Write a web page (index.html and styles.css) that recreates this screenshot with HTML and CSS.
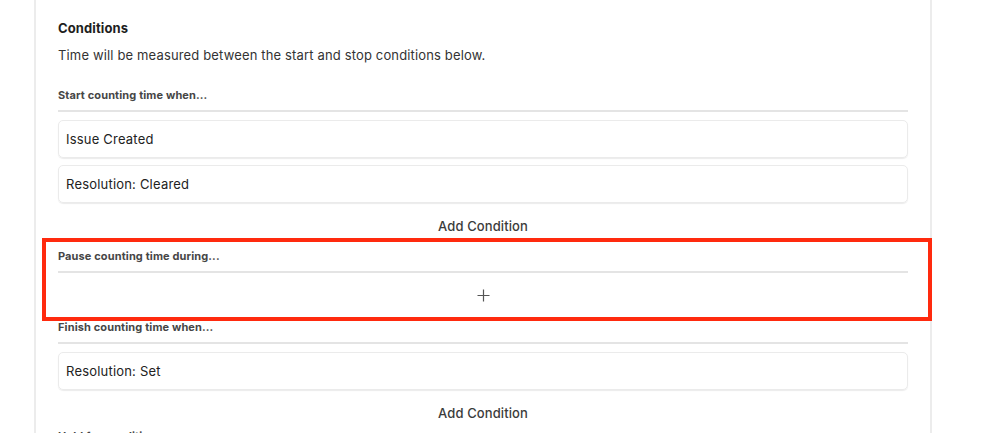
FILE: index.html
```html
<!DOCTYPE html>
<html lang="en">
<head>
<meta charset="utf-8">
<title>Conditions</title>
<link rel="stylesheet" href="styles.css">
</head>
<body>
<div class="page">
  <div class="panel">
    <h3 class="title">Conditions</h3>
    <p class="desc">Time will be measured between the start and stop conditions below.</p>

    <section class="group">
      <div class="label">Start counting time when...</div>
      <div class="list">
        <div class="card">Issue Created</div>
        <div class="card">Resolution: Cleared</div>
      </div>
      <div class="add">Add Condition</div>
    </section>

    <section class="group">
      <div class="label">Pause counting time during...</div>
      <div class="plus-row">
        <svg class="plus" width="13" height="13" viewBox="0 0 13 13" aria-hidden="true">
          <path d="M6.5 0.5V12.5M0.5 6.5H12.5" stroke="#555" stroke-width="1.2" fill="none"/>
        </svg>
      </div>
    </section>

    <section class="group">
      <div class="label">Finish counting time when...</div>
      <div class="list">
        <div class="card">Resolution: Set</div>
      </div>
      <div class="add">Add Condition</div>
    </section>

    <section class="group group-tail">
      <div class="label">Hold for conditions...</div>
    </section>
  </div>
  <div class="highlight"></div>
</div>
</body>
</html>
```

FILE: styles.css
```css
html, body {
  margin: 0;
  padding: 0;
  background: #ffffff;
}
body {
  font-family: Inter, "Noto Sans", "Liberation Sans", sans-serif;
  color: #222;
  overflow: hidden;
  height: 433px;
}
.page {
  position: relative;
  height: 433px;
  overflow: hidden;
}
.panel {
  box-sizing: border-box;
  margin-left: 34px;
  width: 898px;
  min-height: 480px;
  padding: 20px 22px 0 22px;
  border-left: 2px solid #ececec;
  border-right: 2px solid #ececec;
  background: #fff;
}
.title {
  margin: 0;
  font-size: 13px;
  line-height: 16px;
  font-weight: 700;
  color: #1e1e1e;
  letter-spacing: 0.1px;
}
.desc {
  margin: 11px 0 0 0;
  font-size: 13px;
  line-height: 16px;
  color: #333;
  letter-spacing: 0.15px;
}
.group {
  margin-top: 8px;
}
.group:first-of-type {
  margin-top: 25px;
}
.label {
  font-size: 11px;
  line-height: 14px;
  font-weight: 700;
  color: #464646;
  letter-spacing: 0.12px;
  padding-bottom: 8px;
  border-bottom: 2px solid #e4e4e4;
}
.list {
  margin-top: 8px;
  display: flex;
  flex-direction: column;
  gap: 7px;
}
.card {
  box-sizing: border-box;
  height: 38px;
  display: flex;
  align-items: center;
  padding-left: 7px;
  border: 1px solid #ebebeb;
  border-radius: 5px;
  box-shadow: 0 1px 1px rgba(0, 0, 0, 0.08);
  font-size: 13px;
  letter-spacing: 0.2px;
  color: #222;
}
.add {
  margin-top: 8px;
  height: 30px;
  display: flex;
  align-items: center;
  justify-content: center;
  font-size: 13px;
  font-weight: 500;
  letter-spacing: 0.1px;
  color: #3b3b3b;
}
.plus-row {
  box-sizing: border-box;
  height: 39px;
  padding-top: 6px;
  display: flex;
  align-items: center;
  justify-content: center;
}
.plus {
  display: block;
  margin-left: 1px;
}
.group-tail {
  margin-top: 1px;
}
.highlight {
  position: absolute;
  left: 42px;
  top: 238px;
  width: 890px;
  height: 83px;
  box-sizing: border-box;
  border: 4px solid #ff2a0e;
  pointer-events: none;
}
```
